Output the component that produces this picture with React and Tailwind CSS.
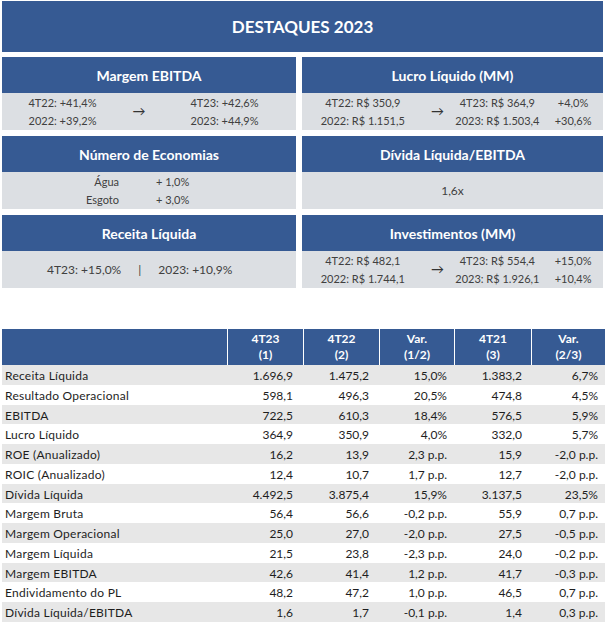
import React from "react";

const font = { fontFamily: "Lato, 'Open Sans', sans-serif" };

const rows = [
  ["Receita Líquida", "1.696,9", "1.475,2", "15,0%", "1.383,2", "6,7%"],
  ["Resultado Operacional", "598,1", "496,3", "20,5%", "474,8", "4,5%"],
  ["EBITDA", "722,5", "610,3", "18,4%", "576,5", "5,9%"],
  ["Lucro Líquido", "364,9", "350,9", "4,0%", "332,0", "5,7%"],
  ["ROE (Anualizado)", "16,2", "13,9", "2,3 p.p.", "15,9", "-2,0 p.p."],
  ["ROIC (Anualizado)", "12,4", "10,7", "1,7 p.p.", "12,7", "-2,0 p.p."],
  ["Dívida Líquida", "4.492,5", "3.875,4", "15,9%", "3.137,5", "23,5%"],
  ["Margem Bruta", "56,4", "56,6", "-0,2 p.p.", "55,9", "0,7 p.p."],
  ["Margem Operacional", "25,0", "27,0", "-2,0 p.p.", "27,5", "-0,5 p.p."],
  ["Margem Líquida", "21,5", "23,8", "-2,3 p.p.", "24,0", "-0,2 p.p."],
  ["Margem EBITDA", "42,6", "41,4", "1,2 p.p.", "41,7", "-0,3 p.p."],
  ["Endividamento do PL", "48,2", "47,2", "1,0 p.p.", "46,5", "0,7 p.p."],
  ["Dívida Líquida/EBITDA", "1,6", "1,7", "-0,1 p.p.", "1,4", "0,3 p.p."],
];

const heads = [
  ["4T23", "(1)"],
  ["4T22", "(2)"],
  ["Var.", "(1/2)"],
  ["4T21", "(3)"],
  ["Var.", "(2/3)"],
];

const valuePad = ["pr-[10px]", "pr-[10px]", "pr-[7px]", "pr-[9px]", "pr-[7px]"];

const Card = ({ title, children }) => (
  <div className="flex flex-col">
    <div className="h-[36px] bg-[#365a93] flex items-center justify-center text-white font-bold text-[14px]">
      {title}
    </div>
    <div className="h-[37px] bg-[#dcdfe3] text-[#404040] text-[11px] pt-px">{children}</div>
  </div>
);

const Arrow = () => <span className="text-[13px] text-[#333]">→</span>;

const Compare = ({ left, right, pct }) => (
  <div className="flex h-full items-center">
    <div className="w-[122px] flex flex-col items-center leading-[18px]">
      {left.map((t) => (
        <span key={t}>{t}</span>
      ))}
    </div>
    <div className="w-[28px] flex justify-center">
      <Arrow />
    </div>
    <div className="w-[92px] flex flex-col items-center leading-[18px]">
      {right.map((t) => (
        <span key={t}>{t}</span>
      ))}
    </div>
    <div className="w-[60px] flex flex-col items-center leading-[18px]">
      {pct.map((t) => (
        <span key={t}>{t}</span>
      ))}
    </div>
  </div>
);

export default function App() {
  return (
    <div className="w-[605px] h-[625px] bg-white pt-px" style={font}>
      <div className="mx-[2px] h-[51px] bg-[#365a93] flex items-center justify-center text-white font-bold text-[17px]">
        DESTAQUES 2023
      </div>

      <div className="mt-[5px] ml-[2px] grid grid-cols-[294px_301px] gap-x-[6px] gap-y-[6px]">
        <Card title="Margem EBITDA">
          <div className="flex h-full items-center">
            <div className="w-[121px] flex flex-col items-center leading-[18px]">
              <span>4T22: +41,4%</span>
              <span>2022: +39,2%</span>
            </div>
            <div className="w-[32px] flex justify-center">
              <Arrow />
            </div>
            <div className="w-[139px] flex flex-col items-center leading-[18px]">
              <span>4T23: +42,6%</span>
              <span>2023: +44,9%</span>
            </div>
          </div>
        </Card>
        <Card title="Lucro Líquido (MM)">
          <Compare
            left={["4T22: R$ 350,9", "2022: R$ 1.151,5"]}
            right={["4T23: R$ 364,9", "2023: R$ 1.503,4"]}
            pct={["+4,0%", "+30,6%"]}
          />
        </Card>
        <Card title="Número de Economias">
          <div className="h-full flex flex-col justify-center leading-[18px]">
            <div className="flex">
              <span className="w-[117px] text-right">Água</span>
              <span className="ml-[37px]">+ 1,0%</span>
            </div>
            <div className="flex">
              <span className="w-[117px] text-right">Esgoto</span>
              <span className="ml-[37px]">+ 3,0%</span>
            </div>
          </div>
        </Card>
        <Card title="Dívida Líquida/EBITDA">
          <div className="h-full flex items-center justify-center text-[12px]">1,6x</div>
        </Card>
        <Card title="Receita Líquida">
          <div className="h-full flex items-center pl-[45px] gap-[17px] text-[12px]">
            <span>4T23: +15,0%</span>
            <span>|</span>
            <span>2023: +10,9%</span>
          </div>
        </Card>
        <Card title="Investimentos (MM)">
          <Compare
            left={["4T22: R$ 482,1", "2022: R$ 1.744,1"]}
            right={["4T23: R$ 554,4", "2023: R$ 1.926,1"]}
            pct={["+15,0%", "+10,4%"]}
          />
        </Card>
      </div>

      <div className="mt-[41px] ml-[2px] w-[603px]">
        <div className="grid grid-cols-[225px_76px_76px_75px_77px_74px] h-[36px] bg-[#365a93] text-white font-bold text-[12px] leading-[16px]">
          <div />
          {heads.map(([a, b], i) => (
            <div key={i} className="border-l border-white flex flex-col items-center justify-center">
              <span>{a}</span>
              <span>{b}</span>
            </div>
          ))}
        </div>
        {rows.map((r, i) => (
          <div
            key={r[0]}
            className={`grid grid-cols-[225px_76px_76px_75px_77px_74px] h-[19.75px] items-center pt-[2px] text-[12px] text-[#1e1e1e] ${
              i % 2 === 0 ? "bg-[#e7e7e7]" : "bg-white"
            }`}
          >
            <span className="pl-[3px] tracking-[0.25px]">{r[0]}</span>
            {r.slice(1).map((v, j) => (
              <span key={j} className={`text-right ${valuePad[j]}`}>
                {v}
              </span>
            ))}
          </div>
        ))}
      </div>
    </div>
  );
}
